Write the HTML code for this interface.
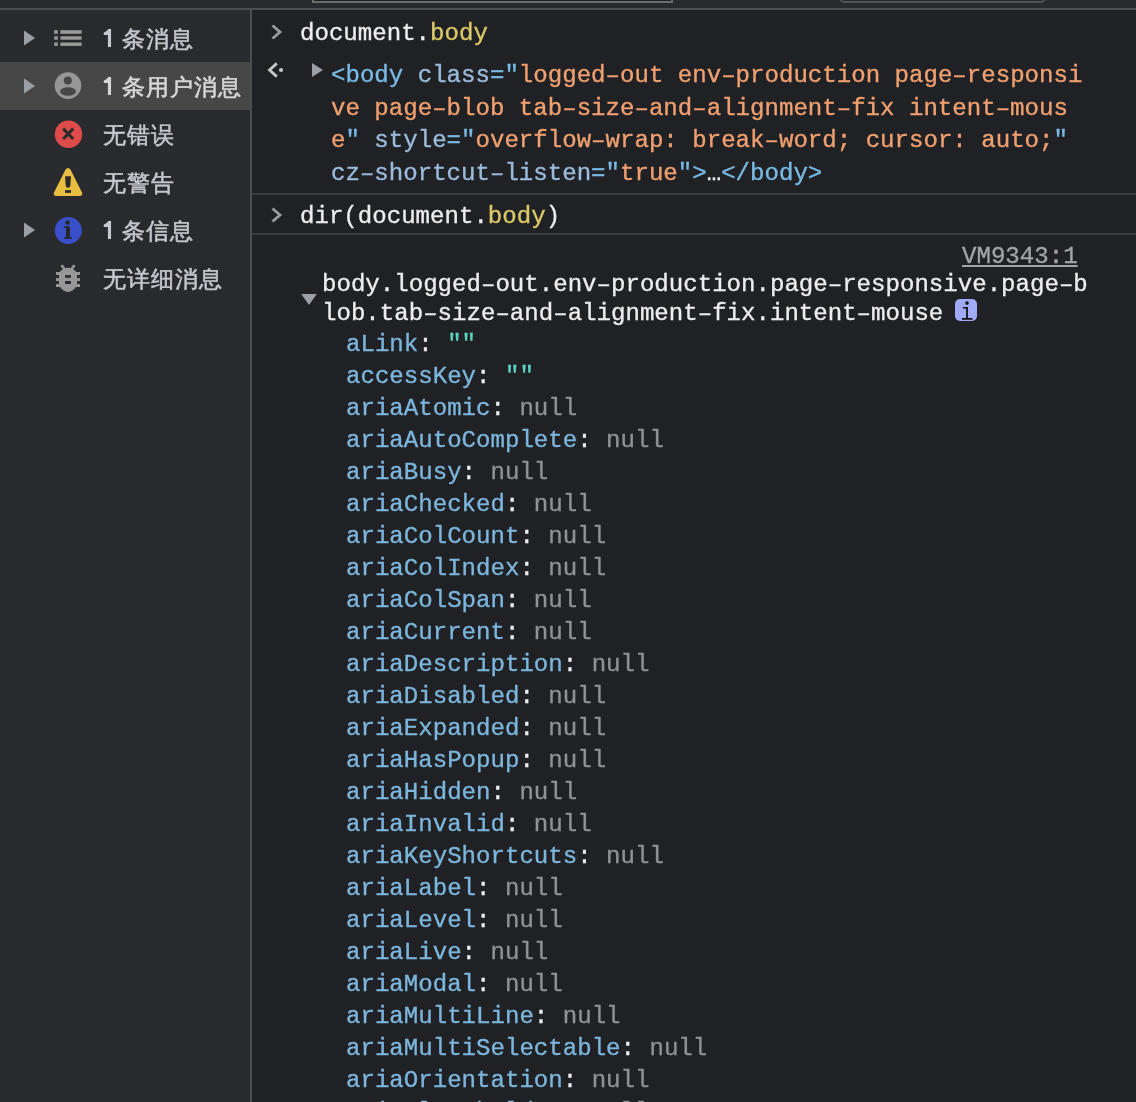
<!DOCTYPE html>
<html><head><meta charset="utf-8">
<style>
html,body{margin:0;padding:0;}
body{width:1136px;height:1102px;overflow:hidden;position:relative;background:#202124;font-family:"Liberation Sans",sans-serif;}
.abs{position:absolute;}
#tb{left:0;top:0;width:1136px;height:8px;background:#292a2d;border-bottom:2px solid #4b4d51;}
#box1{left:312px;top:-20px;width:357px;height:19px;border:2px solid #6b6b6b;background:#1e1f21;}
#box2{left:839px;top:-20px;width:203px;height:19px;border:2px solid #4f5155;border-radius:5px;background:#292a2d;}
#sb{left:0;top:10px;width:250px;height:1092px;background:#292a2d;border-right:2px solid #4b4d51;}
.row{position:absolute;left:0;width:250px;height:48px;}
.row.sel{background:#474747;}
.sbt1{position:absolute;left:0;top:0;color:#c5c9cf;}
.sel .sbt1{color:#d6d6d6;}
.sbt{position:absolute;left:102.5px;top:0.5px;height:48px;line-height:48px;font-size:22.7px;letter-spacing:1.1px;color:#c4c8ce;white-space:nowrap;will-change:transform;-webkit-text-stroke:0.55px currentColor;}
.sel .sbt{color:#d8d8d8;}
.mono{font-family:"Liberation Mono",monospace;font-size:24.08px;white-space:pre;will-change:transform;-webkit-text-stroke:0.35px currentColor;}
.t{position:absolute;white-space:pre;}
.c-def{color:#ededf0;}
.c-y{color:#dbc868;}
.c-tag{color:#79bbe5;}
.c-an{color:#9bbbdc;}
.c-av{color:#f0a070;}
.c-prop{color:#7cb6dd;}
.c-null{color:#8f9295;}
.c-str{color:#5cd5c0;}
.sep{position:absolute;left:252px;width:884px;height:2px;background:#3c3c3c;}
</style></head><body>
<div id="tb" class="abs"></div>
<div id="box1" class="abs"></div>
<div id="box2" class="abs"></div>

<div id="sb" class="abs"></div>
<!-- sidebar rows (absolute page coords) -->
<div class="row" style="top:14px">
  <svg class="abs" style="left:0;top:0" width="100" height="48"><polygon points="24,16.5 35,24 24,31.5" fill="#9aa0a6"/>
  <g fill="#9a9a9a"><rect x="54.2" y="16.2" width="3.6" height="3.6"/><rect x="60.4" y="16.2" width="21.2" height="3.6"/><rect x="54.2" y="22.3" width="3.6" height="3.4"/><rect x="60.4" y="22.3" width="21.2" height="3.4"/><rect x="54.2" y="28.5" width="3.6" height="3.4"/><rect x="60.4" y="28.5" width="21.2" height="3.4"/></g></svg>
  <div class="sbt1"><svg class="abs" style="left:0;top:0" width="120" height="48"><path d="M111.05 15.1 L111.05 33 L107.9 33 L107.9 20.9 L103.8 20.9 L103.8 18.6 Q106.6 18.3 108.3 15.1 Z" fill="currentColor"/></svg></div><div class="sbt" style="left:122.3px">条消息</div>
</div>
<div class="row sel" style="top:62px">
  <svg class="abs" style="left:0;top:0" width="100" height="48"><polygon points="24,16.5 35,24 24,31.5" fill="#9aa0a6"/>
  <circle cx="68" cy="23.6" r="13.3" fill="#969696"/><circle cx="67.8" cy="18.6" r="4" fill="#474747"/><ellipse cx="68" cy="29.5" rx="8" ry="4.2" fill="#474747"/></svg>
  <div class="sbt1"><svg class="abs" style="left:0;top:0" width="120" height="48"><path d="M111.05 15.1 L111.05 33 L107.9 33 L107.9 20.9 L103.8 20.9 L103.8 18.6 Q106.6 18.3 108.3 15.1 Z" fill="currentColor"/></svg></div><div class="sbt" style="left:122.3px">条用户消息</div>
</div>
<div class="row" style="top:110px">
  <svg class="abs" style="left:0;top:0" width="100" height="48">
  <circle cx="68.5" cy="24.2" r="13.7" fill="#dd4b4b"/><path d="M63.2 18.6 L73.2 29 M73.2 18.6 L63.2 29" stroke="#2a2a2a" stroke-width="3"/></svg>
  <div class="sbt">无错误</div>
</div>
<div class="row" style="top:158px">
  <svg class="abs" style="left:0;top:0" width="100" height="48">
  <path d="M68 10 Q69.6 10 70.6 11.8 L82 34.6 Q83 38 79.6 38 L56.4 38 Q53 38 54 34.6 L65.4 11.8 Q66.4 10 68 10 Z" fill="#e9bd3f"/>
  <path d="M65.1 18.3 L71 18.3 L70.3 27.4 Q70.1 29.7 68 29.7 Q65.9 29.7 65.7 27.4 Z" fill="#2a2a2a"/><rect x="65.1" y="32.1" width="5.9" height="2.8" fill="#2a2a2a"/></svg>
  <div class="sbt">无警告</div>
</div>
<div class="row" style="top:206px">
  <svg class="abs" style="left:0;top:0" width="100" height="48"><polygon points="24,16.5 35,24 24,31.5" fill="#9aa0a6"/>
  <circle cx="68.3" cy="24.5" r="13.5" fill="#3a50c9"/><circle cx="67.6" cy="16.6" r="2.3" fill="#25262a"/><path d="M63.9 20.2 L69.9 20.2 L69.9 31.2 L72 31.2 L72 32.8 L63.9 32.8 L63.9 31.2 L66 31.2 L66 21.7 L63.9 21.7 Z" fill="#25262a"/></svg>
  <div class="sbt1"><svg class="abs" style="left:0;top:0" width="120" height="48"><path d="M111.05 15.1 L111.05 33 L107.9 33 L107.9 20.9 L103.8 20.9 L103.8 18.6 Q106.6 18.3 108.3 15.1 Z" fill="currentColor"/></svg></div><div class="sbt" style="left:122.3px">条信息</div>
</div>
<div class="row" style="top:254px">
  <svg class="abs" style="left:0;top:0" width="100" height="48">
  <g fill="#979797"><path d="M59 18.5 L63.5 14.6 Q68 12.9 72.5 14.6 L77 18.5 L77 31.5 Q73 37.9 68 37.9 Q63 37.9 59 31.5 Z"/>
  <rect x="56" y="18" width="24" height="2.9"/><rect x="56" y="24.1" width="24" height="2.9"/><rect x="56" y="30.1" width="24" height="2.9"/></g>
  <path d="M61.4 11.2 L64.6 15 M74.6 11.2 L71.4 15" stroke="#979797" stroke-width="2.6"/>
  <rect x="65.1" y="21.1" width="5.8" height="2.7" fill="#292a2d"/><rect x="65.1" y="27" width="5.8" height="3" fill="#292a2d"/></svg>
  <div class="sbt">无详细消息</div>
</div>
</div>

<!-- console -->
<svg class="abs" style="left:0;top:0" width="1136" height="320">
  <path d="M272.5 25.5 L280 32 L272.5 38.5" fill="none" stroke="#9c9c9c" stroke-width="2.8"/>
  <path d="M276.8 63.4 L269.6 70 L276.8 76.6" fill="none" stroke="#c6c6c6" stroke-width="2.9"/><circle cx="281" cy="70" r="2.1" fill="#c6c6c6"/>
  <polygon points="312,63 323,70 312,77" fill="#9aa0a6"/>
  <path d="M272.5 208.5 L280 215 L272.5 221.5" fill="none" stroke="#9c9c9c" stroke-width="2.8"/>
  <polygon points="301.2,294 316.8,294 309,305" fill="#9aa0a6"/>
</svg>
<div class="t mono c-def" style="left:300px;top:18px;line-height:32px">document.<span class="c-y">body</span></div>
<div class="t mono" style="left:331px;top:60px;line-height:32.67px"><span class="c-tag">&lt;body</span> <span class="c-an">class</span><span class="c-tag">="</span><span class="c-av">logged–out env–production page–responsi</span>
<span class="c-av">ve page–blob tab–size–and–alignment–fix intent–mous</span>
<span class="c-av">e</span><span class="c-tag">"</span> <span class="c-an">style</span><span class="c-tag">="</span><span class="c-av">overflow–wrap: break–word; cursor: auto;</span><span class="c-tag">"</span>
<span class="c-an">cz–shortcut–listen</span><span class="c-tag">="</span><span class="c-av">true</span><span class="c-tag">"&gt;</span><span class="c-def">…</span><span class="c-tag">&lt;/body&gt;</span></div>
<div class="sep" style="top:193px"></div>
<div class="t mono c-def" style="left:300px;top:201px;line-height:32px">dir(document.<span class="c-y">body</span>)</div>
<div class="sep" style="top:233px"></div>
<div class="t mono" style="color:#a0a5aa;left:962px;top:241px;line-height:32px;text-decoration:underline;text-underline-offset:2px">VM9343:1</div>
<div class="t mono c-def" style="left:322px;top:271px;line-height:28.6px">body.logged–out.env–production.page–responsive.page–b
lob.tab–size–and–alignment–fix.intent–mouse</div>
<svg class="abs" style="left:955px;top:299px" width="22" height="22"><rect x="0" y="0" width="22" height="22" rx="5" fill="#a0aaf6"/><circle cx="12" cy="4.1" r="1.8" fill="#111214"/><path d="M7.8 7.9 L12.9 7.9 L12.9 19.1 L17.5 19.1 L17.5 20.7 L6.9 20.7 L6.9 19.1 L11.1 19.1 L11.1 9.4 L7.8 9.4 Z" fill="#111214"/></svg>
<div class="t mono" style="left:346px;top:329px;line-height:32px"><span class="c-prop">aLink</span><span class="c-def">: </span><span class="c-str">""</span>
<span class="c-prop">accessKey</span><span class="c-def">: </span><span class="c-str">""</span>
<span class="c-prop">ariaAtomic</span><span class="c-def">: </span><span class="c-null">null</span>
<span class="c-prop">ariaAutoComplete</span><span class="c-def">: </span><span class="c-null">null</span>
<span class="c-prop">ariaBusy</span><span class="c-def">: </span><span class="c-null">null</span>
<span class="c-prop">ariaChecked</span><span class="c-def">: </span><span class="c-null">null</span>
<span class="c-prop">ariaColCount</span><span class="c-def">: </span><span class="c-null">null</span>
<span class="c-prop">ariaColIndex</span><span class="c-def">: </span><span class="c-null">null</span>
<span class="c-prop">ariaColSpan</span><span class="c-def">: </span><span class="c-null">null</span>
<span class="c-prop">ariaCurrent</span><span class="c-def">: </span><span class="c-null">null</span>
<span class="c-prop">ariaDescription</span><span class="c-def">: </span><span class="c-null">null</span>
<span class="c-prop">ariaDisabled</span><span class="c-def">: </span><span class="c-null">null</span>
<span class="c-prop">ariaExpanded</span><span class="c-def">: </span><span class="c-null">null</span>
<span class="c-prop">ariaHasPopup</span><span class="c-def">: </span><span class="c-null">null</span>
<span class="c-prop">ariaHidden</span><span class="c-def">: </span><span class="c-null">null</span>
<span class="c-prop">ariaInvalid</span><span class="c-def">: </span><span class="c-null">null</span>
<span class="c-prop">ariaKeyShortcuts</span><span class="c-def">: </span><span class="c-null">null</span>
<span class="c-prop">ariaLabel</span><span class="c-def">: </span><span class="c-null">null</span>
<span class="c-prop">ariaLevel</span><span class="c-def">: </span><span class="c-null">null</span>
<span class="c-prop">ariaLive</span><span class="c-def">: </span><span class="c-null">null</span>
<span class="c-prop">ariaModal</span><span class="c-def">: </span><span class="c-null">null</span>
<span class="c-prop">ariaMultiLine</span><span class="c-def">: </span><span class="c-null">null</span>
<span class="c-prop">ariaMultiSelectable</span><span class="c-def">: </span><span class="c-null">null</span>
<span class="c-prop">ariaOrientation</span><span class="c-def">: </span><span class="c-null">null</span>
<span class="c-prop">ariaPlaceholder</span><span class="c-def">: </span><span class="c-null">null</span></div>
</body></html>
